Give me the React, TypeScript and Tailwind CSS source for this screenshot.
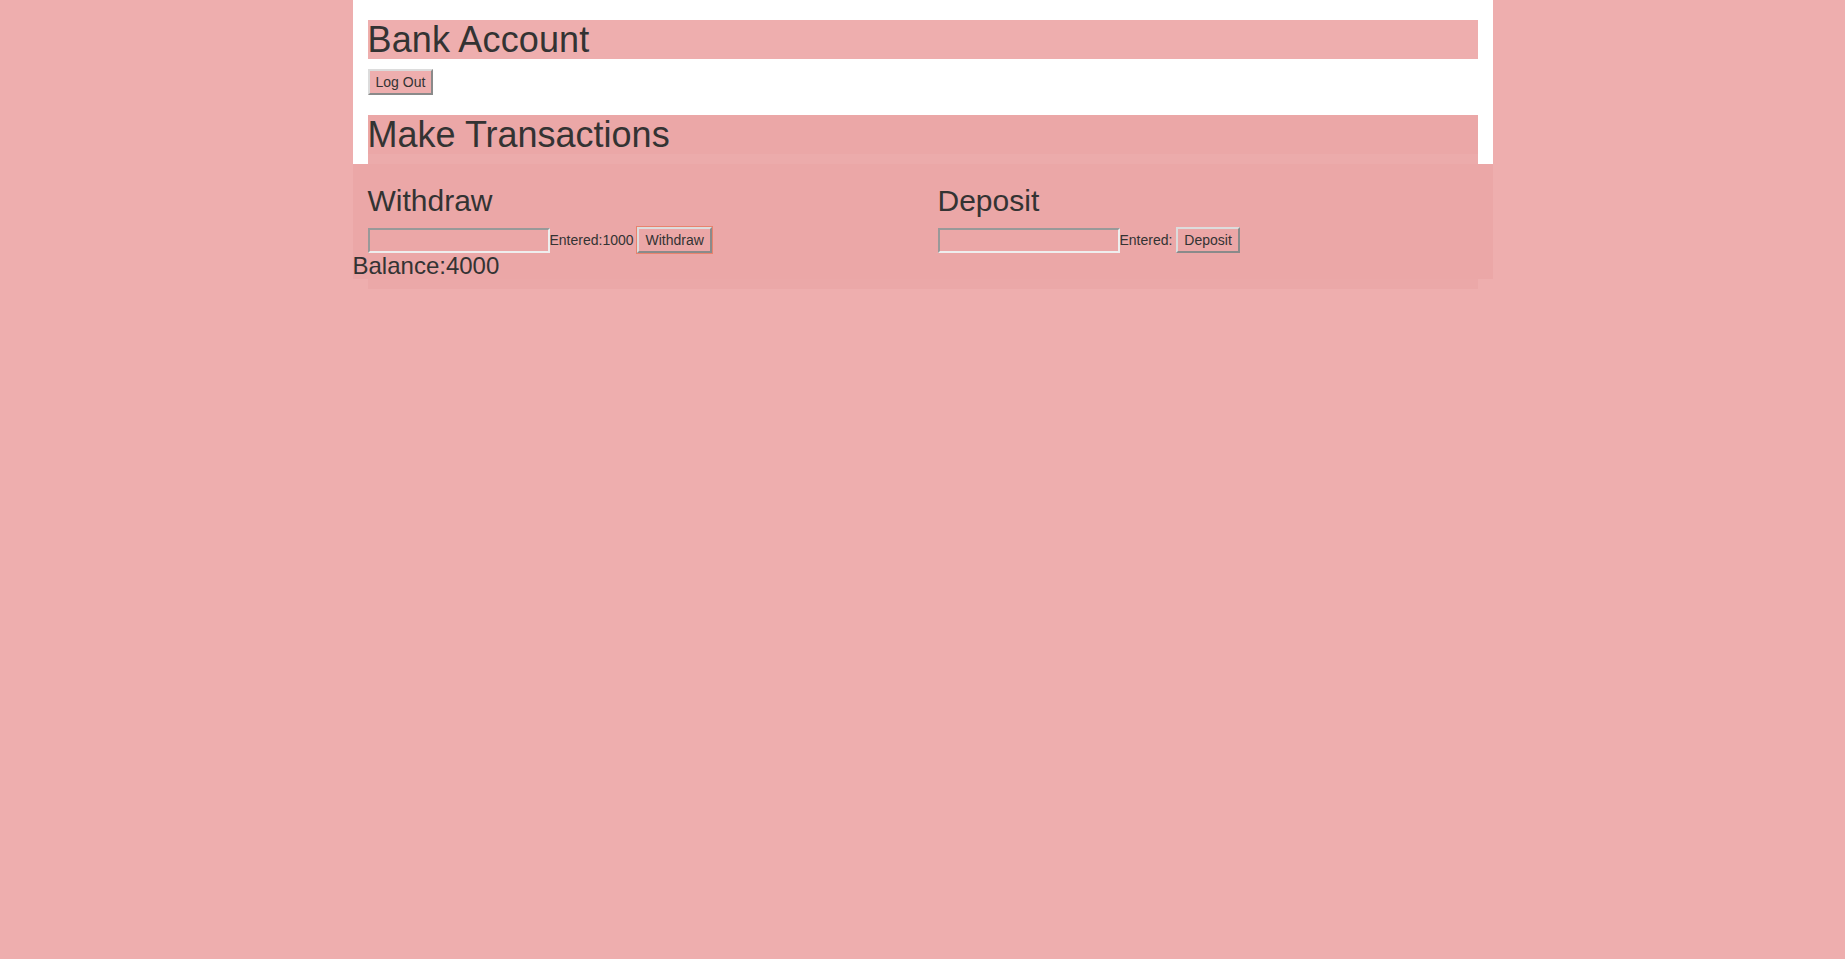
import React from "react";

const font = { fontFamily: '"Liberation Sans", Arial, Helvetica, sans-serif' };

function OutsetButton({ children, focus, bg }: { children: React.ReactNode; focus?: boolean; bg: string }) {
  return (
    <button
      className={
        "h-[26px] px-[6px] text-[14px] leading-[20px] text-[#333] border-2 border-t-[#dcdcdc] border-l-[#dcdcdc] border-b-[#8a8a8a] border-r-[#8a8a8a] " +
        bg +
        (focus ? " outline outline-1 outline-[#e8836e]" : "")
      }
    >
      {children}
    </button>
  );
}

function TxCol({ title, entered, label, focus }: { title: string; entered: string; label: string; focus?: boolean }) {
  return (
    <div className="px-[15px]">
      <h2 className="mt-[20px] mb-[10px] text-[30px] leading-[33px] font-normal text-[#333]">{title}</h2>
      <div className="h-[26px] flex items-center">
        <input
          type="text"
          className="w-[182px] h-[25px] bg-transparent border-2 border-t-[#999999] border-l-[#999999] border-b-[#eeeeee] border-r-[#eeeeee] outline-none"
        />
        <span className="text-[14px] leading-[20px] text-[#333] whitespace-pre">{"Entered:" + entered + " "}</span>
        <OutsetButton focus={focus} bg="bg-transparent">{label}</OutsetButton>
      </div>
    </div>
  );
}

export default function App() {
  return (
    <div className="min-h-screen bg-[#eeaeae] text-[#333]" style={font}>
      <div className="w-[1140px] mx-auto">
        <div className="bg-white px-[15px] pt-[20px]">
          <h1 className="h-[39px] text-[36px] leading-[39px] font-normal bg-[#eeaeae] mb-[10px] tracking-[0.15px]">Bank Account</h1>
          <OutsetButton bg="bg-[#eeaeae]">Log Out</OutsetButton>
          <div className="mt-[20px] bg-[#ecabab]">
            <h1 className="h-[39px] text-[36px] leading-[39px] font-normal bg-[#eba7a7]">Make Transactions</h1>
            <div className="h-[10px]" />
          </div>
        </div>
        <div className="bg-[#eba7a7] h-[115px]">
          <div className="grid grid-cols-2">
            <TxCol title="Withdraw" entered="1000" label="Withdraw" focus />
            <TxCol title="Deposit" entered="" label="Deposit" />
          </div>
          <div className="text-[24px] leading-[26px]">Balance:4000</div>
        </div>
        <div className="mx-[15px] h-[10px] bg-[#eba8a8]" />
      </div>
    </div>
  );
}
